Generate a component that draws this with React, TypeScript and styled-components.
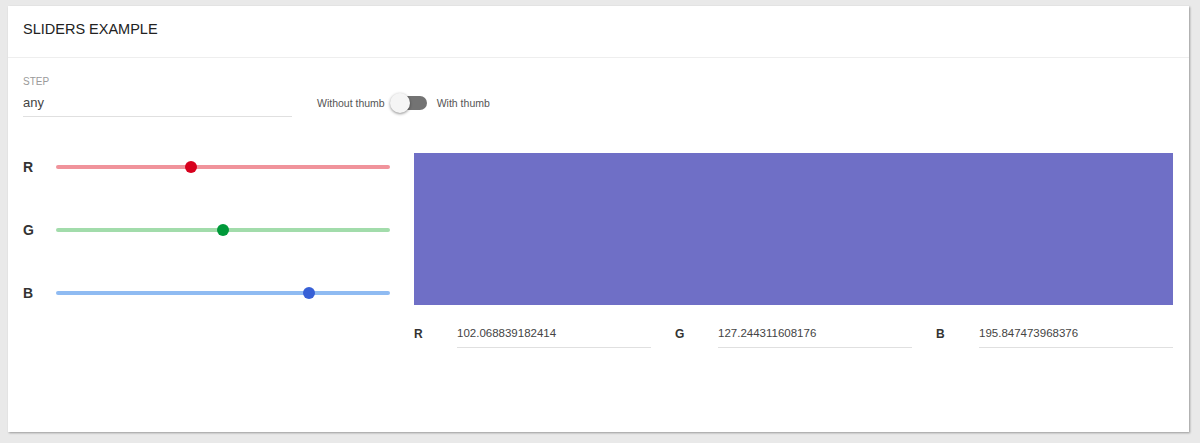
import React from "react";
import styled, { createGlobalStyle } from "styled-components";

const Global = createGlobalStyle`
  html, body { margin: 0; padding: 0; background: #e9e9e9; }
  body { font-family: "Liberation Sans", Arial, sans-serif; color: #333; }
`;

const Page = styled.div`
  padding: 6px 11px 11px 8px;
`;

const Card = styled.div`
  background: #fff;
  height: 426px;
  box-shadow: 1px 1px 2px rgba(0, 0, 0, 0.35);
  display: flex;
  flex-direction: column;
`;

const Header = styled.div`
  height: 52px;
  padding: 0 15px 6px;
  box-sizing: border-box;
  display: flex;
  align-items: center;
  border-bottom: 1px solid #eeeeee;
  font-size: 14.5px;
  color: #222;
`;

const Body = styled.div`
  padding: 17px 16px 0 15px;
  display: flex;
  flex-direction: column;
`;

const TopRow = styled.div`
  display: flex;
  align-items: flex-end;
`;

const Field = styled.div<{ $width: number }>`
  width: ${(p) => p.$width}px;
  display: flex;
  flex-direction: column;
`;

const Caption = styled.div`
  font-size: 10px;
  color: #9a9a9a;
  height: 14px;
  line-height: 14px;
`;

const Input = styled.div`
  height: 27px;
  line-height: 27px;
  font-size: 13px;
  color: #444;
  border-bottom: 1px solid #e0e0e0;
`;

const Toggle = styled.div`
  display: flex;
  align-items: center;
  margin-left: 25px;
  height: 28px;
  font-size: 10.5px;
  color: #555;
`;

const SwitchBox = styled.div`
  position: relative;
  width: 37px;
  height: 20px;
  margin: 0 10px 0 5px;
`;

const Track = styled.div`
  position: absolute;
  left: 4px;
  right: 0;
  top: 3px;
  height: 14px;
  border-radius: 7px;
  background: #737373;
`;

const Knob = styled.div`
  position: absolute;
  left: 0;
  top: 0;
  width: 20px;
  height: 20px;
  border-radius: 50%;
  background: #f5f5f5;
  box-shadow: 0 1px 3px rgba(0, 0, 0, 0.45);
`;

const Main = styled.div`
  display: flex;
  margin-top: 36px;
`;

const SliderCol = styled.div`
  width: 367px;
  display: flex;
  flex-direction: column;
  gap: 43px;
  padding-top: 4px;
`;

const SliderRow = styled.div`
  display: flex;
  align-items: center;
  height: 20px;
`;

const ChannelLabel = styled.div`
  width: 33px;
  font-size: 14px;
  font-weight: bold;
  color: #333;
`;

const Rail = styled.div<{ $color: string }>`
  position: relative;
  flex: 1;
  height: 4px;
  border-radius: 2px;
  background: ${(p) => p.$color};
`;

const Thumb = styled.div<{ $color: string }>`
  position: absolute;
  top: 50%;
  width: 12px;
  height: 12px;
  margin-top: -6px;
  border-radius: 50%;
  background: ${(p) => p.$color};
`;

const ColorCol = styled.div`
  flex: 1;
  margin-left: 24px;
  display: flex;
  flex-direction: column;
`;

const Swatch = styled.div`
  height: 152px;
`;

const ValueRow = styled.div`
  display: grid;
  grid-template-columns: repeat(3, 1fr);
  column-gap: 24px;
  margin-top: 15px;
`;

const ValueCell = styled.div`
  display: flex;
  align-items: center;
`;

const ValueLabel = styled.div`
  width: 43px;
  font-size: 12px;
  font-weight: bold;
  color: #333;
`;

const ValueInput = styled(Input)`
  flex: 1;
  font-size: 11.5px;
`;

const channels = [
  { name: "R", value: 102.068839182414, rail: "#f0939b", thumb: "#d7001d" },
  { name: "G", value: 127.244311608176, rail: "#a2dcab", thumb: "#00993a" },
  { name: "B", value: 195.847473968376, rail: "#8fbbf2", thumb: "#3760d6" },
];

export default function App() {
  return (
    <>
      <Global />
      <Page>
        <Card>
          <Header>SLIDERS EXAMPLE</Header>
          <Body>
            <TopRow>
              <Field $width={269}>
                <Caption>STEP</Caption>
                <Input>any</Input>
              </Field>
              <Toggle>
                Without thumb
                <SwitchBox>
                  <Track />
                  <Knob />
                </SwitchBox>
                With thumb
              </Toggle>
            </TopRow>
            <Main>
              <SliderCol>
                {channels.map((c) => (
                  <SliderRow key={c.name}>
                    <ChannelLabel>{c.name}</ChannelLabel>
                    <Rail $color={c.rail}>
                      <Thumb
                        $color={c.thumb}
                        style={{ left: `calc((100% - 12px) * ${c.value / 255})` }}
                      />
                    </Rail>
                  </SliderRow>
                ))}
              </SliderCol>
              <ColorCol>
                <Swatch style={{ background: "#6f6fc6" }} />
                <ValueRow>
                  {channels.map((c) => (
                    <ValueCell key={c.name}>
                      <ValueLabel>{c.name}</ValueLabel>
                      <ValueInput>{c.value}</ValueInput>
                    </ValueCell>
                  ))}
                </ValueRow>
              </ColorCol>
            </Main>
          </Body>
        </Card>
      </Page>
    </>
  );
}
